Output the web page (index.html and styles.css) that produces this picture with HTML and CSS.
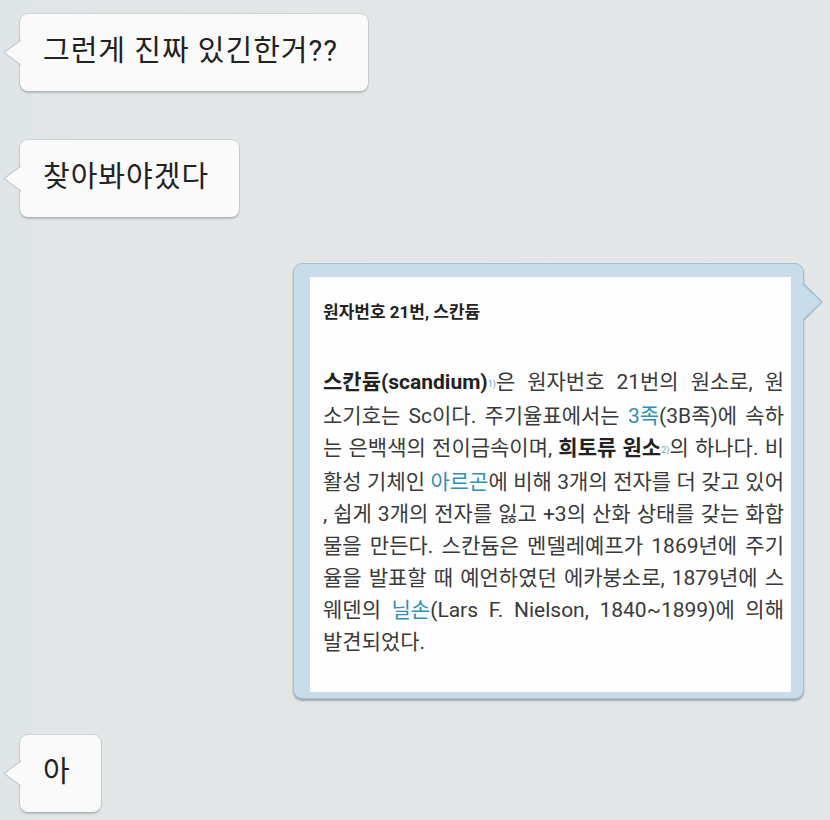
FILE: index.html
```html
<!DOCTYPE html>
<html lang="ko">
<head>
<meta charset="utf-8">
<title>chat</title>
<link rel="stylesheet" href="styles.css">
</head>
<body>
<div class="chat">
  <div class="row left first">
    <div class="bubble">그런게 진짜 있긴한거??</div>
  </div>
  <div class="row left second">
    <div class="bubble">찾아봐야겠다</div>
  </div>
  <div class="row right third">
    <div class="card">
      <div class="sheet">
        <div class="title">원자번호 21번, 스칸듐</div>
        <div class="body">
          <div class="ln"><b>스칸듐(scandium)</b><span class="fn">1)</span>은 원자번호 21번의 원소로, 원</div>
          <div class="ln">소기호는 Sc이다. 주기율표에서는 <span class="lk">3족</span>(3B족)에 속하</div>
          <div class="ln">는 은백색의 전이금속이며, <b>희토류 원소</b><span class="fn">2)</span>의 하나다. 비</div>
          <div class="ln">활성 기체인 <span class="lk">아르곤</span>에 비해 3개의 전자를 더 갖고 있어</div>
          <div class="ln">, 쉽게 3개의 전자를 잃고 +3의 산화 상태를 갖는 화합</div>
          <div class="ln">물을 만든다. 스칸듐은 멘델레예프가 1869년에 주기</div>
          <div class="ln">율을 발표할 때 예언하였던 에카붕소로, 1879년에 스</div>
          <div class="ln">웨덴의 <span class="lk">닐손</span>(Lars F. Nielson, 1840~1899)에 의해</div>
          <div class="ln last">발견되었다.</div>
        </div>
      </div>
    </div>
  </div>
  <div class="row left fourth">
    <div class="bubble">아</div>
  </div>
</div>
</body>
</html>
```

FILE: styles.css
```css
html, body {
  margin: 0;
  padding: 0;
}
body {
  width: 830px;
  height: 820px;
  overflow: hidden;
  background: linear-gradient(90deg, #dfe5e8 0%, #e3e6e7 12%, #e4e7e8 100%);
  font-family: Roboto, "Noto Sans CJK KR", sans-serif;
  color: #242424;
}
.chat {
  display: flex;
  flex-direction: column;
  padding-top: 14px;
}
.row {
  display: flex;
}
.row.left {
  justify-content: flex-start;
  padding-left: 20px;
}
.row.right {
  justify-content: flex-end;
  padding-right: 26px;
}
.second { margin-top: 49px; }
.third { margin-top: 46px; }
.fourth { margin-top: 36px; }

.bubble {
  position: relative;
  background: #fafafa;
  border-radius: 8px;
  padding: 19px 30px 21px 23px;
  font-size: 29px;
  line-height: 37px;
  letter-spacing: 1px;
  color: #222;
  box-shadow: 0 0 0 1px rgba(120, 130, 135, 0.18), 0 2px 2px rgba(80, 90, 95, 0.28);
}
.bubble::before {
  content: "";
  position: absolute;
  left: -17px;
  top: 25px;
  width: 18px;
  height: 27px;
  background: #c9cdcf;
  clip-path: polygon(100% 0, 0 50%, 100% 100%);
}
.bubble::after {
  content: "";
  position: absolute;
  left: -15px;
  top: 26px;
  width: 17px;
  height: 25px;
  background: #fafafa;
  clip-path: polygon(100% 0, 0 50%, 100% 100%);
}

.card {
  position: relative;
  width: 481px;
  background: #c8dcea;
  border: 1px solid #a9bfcf;
  border-radius: 9px;
  padding: 13px 12px 6px 16px;
  box-shadow: 0 2px 2px rgba(70, 90, 105, 0.45);
}
.card::before {
  content: "";
  position: absolute;
  right: -20px;
  top: 18px;
  width: 20px;
  height: 40px;
  background: #a9bfcf;
  clip-path: polygon(0 0, 100% 50%, 0 100%);
}
.card::after {
  content: "";
  position: absolute;
  right: -18px;
  top: 20px;
  width: 19px;
  height: 36px;
  background: #c8dcea;
  clip-path: polygon(0 0, 100% 50%, 0 100%);
}
.sheet {
  background: #fefefe;
  padding: 21px 7px 34px 13px;
}
.title {
  font-size: 17px;
  line-height: 28px;
  font-weight: 700;
  color: #222;
}
.body {
  margin-top: 40px;
  font-size: 21px;
  line-height: 32px;
  color: #3a3a3a;
}
.ln {
  text-align: justify;
  text-align-last: justify;
}
.ln.last {
  text-align-last: left;
}
.ln b {
  font-weight: 700;
  color: #222;
}
.lk {
  color: #2f8fb6;
}
.fn {
  font-size: 9px;
  color: #6fa3cc;
  vertical-align: 2px;
  letter-spacing: 0;
}
```
